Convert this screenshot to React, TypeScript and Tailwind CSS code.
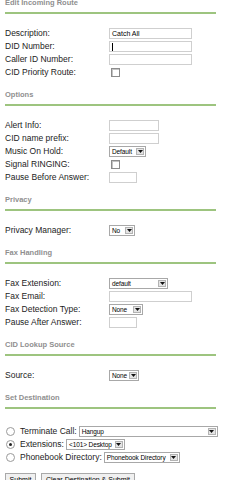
import type { ReactNode } from "react";

function SectionHeader({ title, className = "" }: { title: string; className?: string }) {
  return (
    <div className={className}>
      <div className="h-[10px] text-[7.5px] font-bold leading-[10px] text-[#8f8f8f]">{title}</div>
      <div className="mt-[4px] h-[2px] w-[211px] bg-[#9dc47f]" />
    </div>
  );
}

function Row({ label, children }: { label: string; children?: ReactNode }) {
  return (
    <div className="flex h-[13px] items-center">
      <span className="w-[104px] shrink-0 text-[8.5px] leading-none text-[#1c1c1c]">{label}</span>
      {children}
    </div>
  );
}

function TextInput({ className, value, caret }: { className: string; value?: string; caret?: boolean }) {
  return (
    <div
      className={`flex h-[11px] items-center border border-[#cfcfcf] bg-white pl-[2px] text-[7px] leading-[9px] text-black ${className}`}
    >
      {value}
      {caret && <span className="h-[8px] w-px bg-black" />}
    </div>
  );
}

function Check() {
  return <div className="ml-[2px] h-[9px] w-[9px] border border-[#8c8c8c] bg-white shadow-[inset_1px_1px_0_#c4c4c4]" />;
}

function Select({ className, value }: { className: string; value: string }) {
  return (
    <div className={`flex h-[11px] items-stretch border border-[#a8a8a8] bg-white ${className}`}>
      <span className="flex-1 overflow-hidden whitespace-nowrap pl-[2px] text-[6.5px] leading-[9px] tracking-[-0.1px] text-black">
        {value}
      </span>
      <span className="m-px flex w-[8px] shrink-0 items-center justify-center border border-[#b3b3b3] bg-[#e4e4e4]">
        <svg width="5" height="3" viewBox="0 0 5 3">
          <path d="M0 0h5L2.5 3z" fill="#111" />
        </svg>
      </span>
    </div>
  );
}

function Radio({ checked }: { checked?: boolean }) {
  return (
    <span className="ml-px mr-[5px] flex h-[9px] w-[9px] shrink-0 items-center justify-center rounded-full border border-[#9a9a9a] bg-white">
      {checked && <span className="h-[3px] w-[3px] rounded-full bg-[#222]" />}
    </span>
  );
}

function RadioRow({ label, checked, children }: { label: string; checked?: boolean; children: ReactNode }) {
  return (
    <div className="flex h-[13px] items-center">
      <Radio checked={checked} />
      <span className="mr-[2px] text-[8.5px] leading-none text-[#1c1c1c]">{label}</span>
      {children}
    </div>
  );
}

export default function App() {
  return (
    <div className="min-h-screen w-[241px] overflow-hidden bg-white pl-[5px] font-['Liberation_Sans',Arial,sans-serif]">
      <SectionHeader title="Edit Incoming Route" className="-mt-[2px]" />
      <div className="mt-[13px]">
        <Row label="Description:">
          <TextInput className="w-[83px]" value="Catch All" />
        </Row>
        <Row label="DID Number:">
          <TextInput className="w-[83px]" caret />
        </Row>
        <Row label="Caller ID Number:">
          <TextInput className="w-[83px]" />
        </Row>
        <Row label="CID Priority Route:">
          <Check />
        </Row>
      </div>

      <SectionHeader title="Options" className="mt-[11px]" />
      <div className="mt-[13px]">
        <Row label="Alert Info:">
          <TextInput className="w-[50px]" />
        </Row>
        <Row label="CID name prefix:">
          <TextInput className="w-[50px]" />
        </Row>
        <Row label="Music On Hold:">
          <Select className="w-[37px]" value="Default" />
        </Row>
        <Row label="Signal RINGING:">
          <Check />
        </Row>
        <Row label="Pause Before Answer:">
          <TextInput className="w-[28px]" />
        </Row>
      </div>

      <SectionHeader title="Privacy" className="mt-[11px]" />
      <div className="mt-[13px]">
        <Row label="Privacy Manager:">
          <Select className="w-[26px]" value="No" />
        </Row>
      </div>

      <SectionHeader title="Fax Handling" className="mt-[11px]" />
      <div className="mt-[13px]">
        <Row label="Fax Extension:">
          <Select className="w-[59px]" value="default" />
        </Row>
        <Row label="Fax Email:">
          <TextInput className="w-[83px]" />
        </Row>
        <Row label="Fax Detection Type:">
          <Select className="w-[34px]" value="None" />
        </Row>
        <Row label="Pause After Answer:">
          <TextInput className="w-[28px]" />
        </Row>
      </div>

      <SectionHeader title="CID Lookup Source" className="mt-[11px]" />
      <div className="mt-[13px]">
        <Row label="Source:">
          <Select className="w-[30px]" value="None" />
        </Row>
      </div>

      <SectionHeader title="Set Destination" className="mt-[11px]" />
      <div className="mt-[16px]">
        <RadioRow label="Terminate Call:">
          <Select className="w-[139px]" value="Hangup" />
        </RadioRow>
        <RadioRow label="Extensions:" checked>
          <Select className="w-[59px]" value="<101> Desktop" />
        </RadioRow>
        <RadioRow label="Phonebook Directory:">
          <Select className="w-[76px]" value="Phonebook Directory" />
        </RadioRow>
      </div>

      <div className="mt-[9px] flex gap-[5px]">
        <button className="h-[15px] w-[31px] border border-[#a9a9a9] bg-[#f0f0f0] text-[7px] text-black">Submit</button>
        <button className="h-[15px] w-[94px] border border-[#a9a9a9] bg-[#f0f0f0] text-[7px] text-black">
          Clear Destination &amp; Submit
        </button>
      </div>
    </div>
  );
}
